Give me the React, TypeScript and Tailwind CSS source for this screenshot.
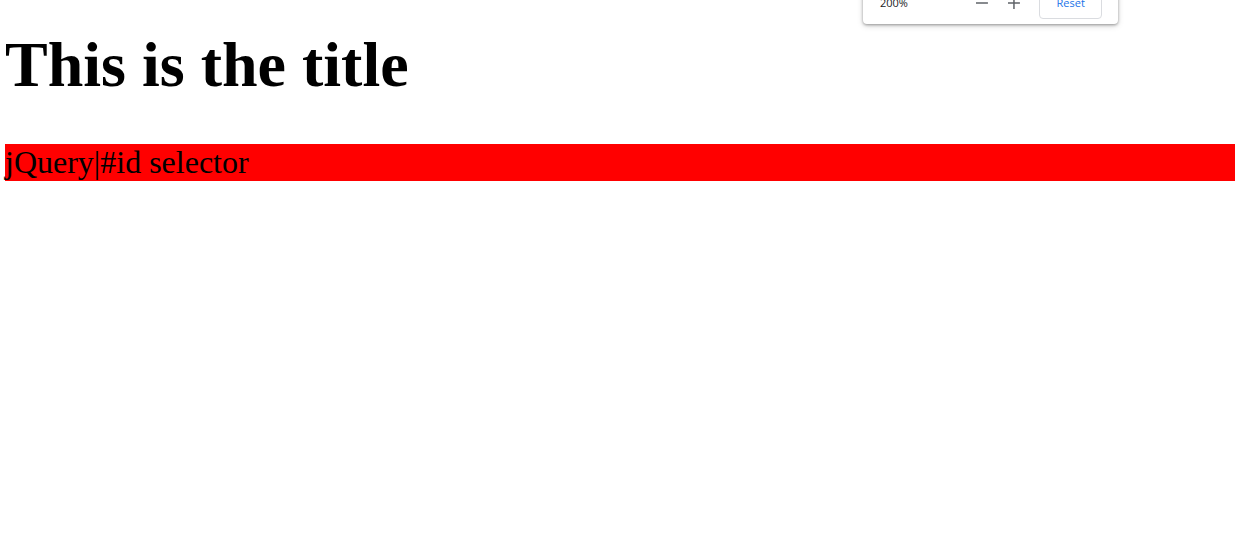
import React from 'react'

function ZoomPopup() {
  return (
    <div className="absolute left-[863px] top-[-24px] w-[255px] h-[48px] bg-white rounded-b-[4px] shadow-[0_1px_3px_rgba(0,0,0,0.35),0_2px_6px_rgba(0,0,0,0.15)] font-['Open_Sans',sans-serif]">
      <div className="flex items-center h-full pl-[17px] pr-[16px] pt-[5px]">
        <span className="text-[11px] text-[#202124] w-[88px] leading-none">200%</span>
        <svg width="14" height="14" viewBox="0 0 14 14" className="ml-[7px]">
          <path d="M1 7h12" stroke="#5f6368" strokeWidth="1.5" />
        </svg>
        <svg width="14" height="14" viewBox="0 0 14 14" className="ml-[19px]">
          <path d="M1 7h12M7 1v12" stroke="#5f6368" strokeWidth="1.5" />
        </svg>
        <button className="ml-[18px] w-[63px] h-[32px] border border-[#dadce0] rounded-[4px] text-[11px] text-[#1a73e8] leading-none bg-white">
          Reset
        </button>
      </div>
    </div>
  )
}

export default function App() {
  return (
    <div className="relative min-h-[535px] bg-white overflow-hidden font-['Liberation_Serif','Times_New_Roman',serif] text-black">
      <div className="pt-[28px] pl-[5px]">
        <h1 className="text-[64px] font-bold leading-[73.6px]">This is the title</h1>
        <div id="my-id" className="mt-[42px] bg-[#ff0000] text-[32px] leading-[37px]">
          jQuery|#id selector
        </div>
      </div>
      <ZoomPopup />
    </div>
  )
}
